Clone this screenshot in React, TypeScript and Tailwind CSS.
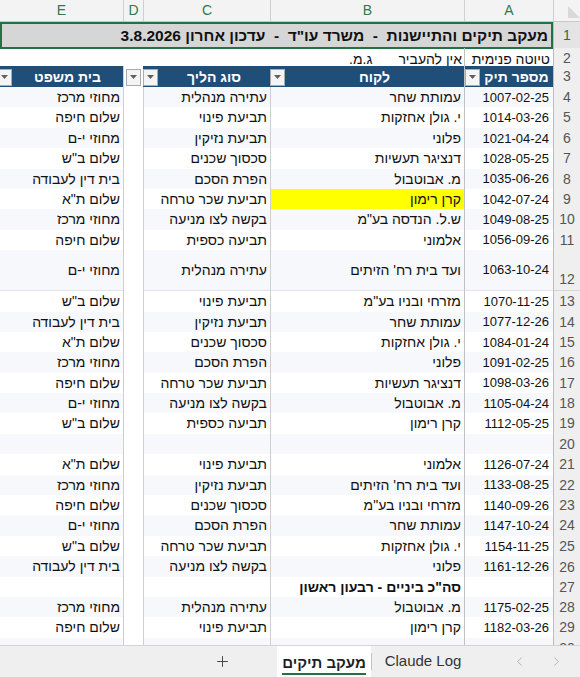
import { ChevronLeft, ChevronRight, Plus } from 'lucide-react';

type Row = {
  n: number;
  a?: string;
  b?: string;
  c?: string;
  e?: string;
  tall?: boolean;
  hl?: boolean;
  total?: boolean;
  thick?: boolean;
};

const rows: Row[] = [
  { n: 4, a: '1007-02-25', b: 'עמותת שחר', c: 'עתירה מנהלית', e: 'מחוזי מרכז' },
  { n: 5, a: '1014-03-26', b: 'י. גולן אחזקות', c: 'תביעת פינוי', e: 'שלום חיפה' },
  { n: 6, a: '1021-04-24', b: 'פלוני', c: 'תביעת נזיקין', e: 'מחוזי י-ם' },
  { n: 7, a: '1028-05-25', b: 'דנציגר תעשיות', c: 'סכסוך שכנים', e: 'שלום ב"ש' },
  { n: 8, a: '1035-06-26', b: 'מ. אבוטבול', c: 'הפרת הסכם', e: 'בית דין לעבודה' },
  { n: 9, a: '1042-07-24', b: 'קרן רימון', c: 'תביעת שכר טרחה', e: 'שלום ת"א', hl: true },
  { n: 10, a: '1049-08-25', b: 'ש.ל. הנדסה בע"מ', c: 'בקשה לצו מניעה', e: 'מחוזי מרכז' },
  { n: 11, a: '1056-09-26', b: 'אלמוני', c: 'תביעה כספית', e: 'שלום חיפה' },
  { n: 12, a: '1063-10-24', b: "ועד בית רח' הזיתים", c: 'עתירה מנהלית', e: 'מחוזי י-ם', tall: true },
  { n: 13, a: '1070-11-25', b: 'מזרחי ובניו בע"מ', c: 'תביעת פינוי', e: 'שלום ב"ש' },
  { n: 14, a: '1077-12-26', b: 'עמותת שחר', c: 'תביעת נזיקין', e: 'בית דין לעבודה' },
  { n: 15, a: '1084-01-24', b: 'י. גולן אחזקות', c: 'סכסוך שכנים', e: 'שלום ת"א' },
  { n: 16, a: '1091-02-25', b: 'פלוני', c: 'הפרת הסכם', e: 'מחוזי מרכז' },
  { n: 17, a: '1098-03-26', b: 'דנציגר תעשיות', c: 'תביעת שכר טרחה', e: 'שלום חיפה' },
  { n: 18, a: '1105-04-24', b: 'מ. אבוטבול', c: 'בקשה לצו מניעה', e: 'מחוזי י-ם' },
  { n: 19, a: '1112-05-25', b: 'קרן רימון', c: 'תביעה כספית', e: 'שלום ב"ש' },
  { n: 20 },
  { n: 21, a: '1126-07-24', b: 'אלמוני', c: 'תביעת פינוי', e: 'שלום ת"א' },
  { n: 22, a: '1133-08-25', b: "ועד בית רח' הזיתים", c: 'תביעת נזיקין', e: 'מחוזי מרכז' },
  { n: 23, a: '1140-09-26', b: 'מזרחי ובניו בע"מ', c: 'סכסוך שכנים', e: 'שלום חיפה' },
  { n: 24, a: '1147-10-24', b: 'עמותת שחר', c: 'הפרת הסכם', e: 'מחוזי י-ם' },
  { n: 25, a: '1154-11-25', b: 'י. גולן אחזקות', c: 'תביעת שכר טרחה', e: 'שלום ב"ש' },
  { n: 26, a: '1161-12-26', b: 'פלוני', c: 'בקשה לצו מניעה', e: 'בית דין לעבודה', thick: true },
  { n: 27, b: 'סה"כ ביניים - רבעון ראשון', total: true },
  { n: 28, a: '1175-02-25', b: 'מ. אבוטבול', c: 'עתירה מנהלית', e: 'מחוזי מרכז' },
  { n: 29, a: '1182-03-26', b: 'קרן רימון', c: 'תביעת פינוי', e: 'שלום חיפה' },
  { n: 30 },
];

const FONT = { fontFamily: '"Liberation Sans", "Noto Sans", sans-serif' };

function FilterButton({ className = '' }: { className?: string }) {
  return (
    <div
      className={`w-[15px] h-[17px] shrink-0 bg-[#f4f4f4] border border-[#ababab] flex items-center justify-center ${className}`}
    >
      <svg width="7" height="4" viewBox="0 0 7 4">
        <polygon points="0,0 7,0 3.5,4" fill="#5f5f5f" />
      </svg>
    </div>
  );
}

function DataRow({ row }: { row: Row }) {
  const band = row.n % 2 === 0 && !row.total ? 'bg-[#f6f8fb]' : 'bg-white';
  const line = row.thick ? 'border-b-2 border-b-black' : 'border-b border-b-[#dde3ea]';
  const height = row.tall ? 'h-[41px]' : 'h-[20.4px]';
  return (
    <div className={`grid grid-cols-[27px_89px_194px_127px_20px_1fr] ${height}`}>
      <div
        className={`flex justify-center ${row.tall ? 'items-end' : 'items-center'} bg-[#efefef] border-b border-b-[#d6d6d6] border-l border-l-[#bcbcbc] text-[14px] text-[#555]`}
      >
        {row.n}
      </div>
      <div className={`flex items-center pr-[4px] text-[13px] border-l border-l-[#c2c2c2] ${band} ${line}`}>
        {row.a}
      </div>
      <div
        className={`flex items-center pr-[3px] text-[14px] border-l border-l-[#cfcfcf] whitespace-nowrap ${row.hl ? 'bg-[#ffff00]' : band} ${row.total ? 'font-bold' : ''} ${line}`}
      >
        {row.b}
      </div>
      <div className={`flex items-center pr-[3px] text-[14px] border-l border-l-[#cfcfcf] whitespace-nowrap ${band} ${line}`}>
        {row.c}
      </div>
      <div className="bg-white border-l border-l-[#cfcfcf]" />
      <div className={`flex items-center pr-[3px] text-[14px] whitespace-nowrap ${band} ${line}`}>{row.e}</div>
    </div>
  );
}

export default function App() {
  return (
    <div className="w-[580px] h-[677px] flex flex-col overflow-hidden bg-white text-[#111]" style={FONT}>
      <div dir="rtl" className="flex-1 overflow-hidden">
        {/* Column letters */}
        <div className="grid grid-cols-[27px_89px_194px_127px_20px_1fr] h-[22px] bg-[#f3f3f3] border-b border-b-[#c8c8c8] text-[14px] text-[#2d7a4d]">
          <div className="flex items-end justify-start border-l border-l-[#d0d0d0] pl-[3px] pb-[3px]">
            <svg width="12" height="12" viewBox="0 0 12 12">
              <polygon points="0,12 0,0 12,12" fill="#d9d9d9" />
            </svg>
          </div>
          <div className="flex items-center justify-center border-l border-l-[#d0d0d0]">A</div>
          <div className="flex items-center justify-center border-l border-l-[#d0d0d0]">B</div>
          <div className="flex items-center justify-center border-l border-l-[#d0d0d0]">C</div>
          <div className="flex items-center justify-center border-l border-l-[#d0d0d0]">D</div>
          <div className="flex items-center justify-center">E</div>
        </div>

        {/* Row 1: title */}
        <div className="grid grid-cols-[27px_89px_194px_127px_20px_1fr] h-[26px]">
          <div className="flex items-end justify-center pb-[2px] bg-[#e4e4e4] border-b border-b-[#d6d6d6] border-l border-l-[#bcbcbc] text-[14px] text-[#217346]">
            1
          </div>
          <div className="col-span-5 flex items-center pr-[3px] bg-[#d6d6d6] border-2 border-[#217346] text-[15.5px] font-bold whitespace-pre">
            {'מעקב תיקים והתיישנות  -  משרד עו"ד  -  עדכון אחרון 3.8.2026'}
          </div>
        </div>

        {/* Row 2 */}
        <div className="grid grid-cols-[27px_89px_194px_127px_20px_1fr] h-[18px] text-[14px]">
          <div className="flex items-center justify-center bg-[#efefef] border-b border-b-[#d6d6d6] border-l border-l-[#bcbcbc] text-[#555]">
            2
          </div>
          <div className="flex items-center pr-[3px] border-l border-l-[#c2c2c2] whitespace-nowrap">טיוטה פנימית</div>
          <div className="flex items-center gap-[26px] pr-[2px] whitespace-nowrap">
            <span>אין להעביר</span>
            <span>ג.מ.</span>
          </div>
          <div />
          <div />
          <div />
        </div>

        {/* Row 3: table header */}
        <div className="grid grid-cols-[27px_89px_194px_127px_20px_1fr] h-[21px] text-[14px] font-bold text-white">
          <div className="flex items-center justify-center bg-[#efefef] border-b border-b-[#d6d6d6] border-l border-l-[#bcbcbc] font-normal text-[#555]">
            3
          </div>
          <div className="flex items-center bg-[#1f4e79] border-l border-l-[#c2c2c2]">
            <span className="flex-1 text-center">מספר תיק</span>
            <FilterButton />
          </div>
          <div className="flex items-center bg-[#1f4e79]">
            <span className="flex-1 text-center">לקוח</span>
            <FilterButton />
          </div>
          <div className="flex items-center bg-[#1f4e79]">
            <span className="flex-1 text-center">סוג הליך</span>
            <FilterButton />
          </div>
          <div className="flex items-center bg-white border-l border-l-[#cfcfcf]">
            <span className="flex-1" />
            <FilterButton className="ml-[2px]" />
          </div>
          <div className="flex items-center bg-[#1f4e79]">
            <span className="flex-1 text-center">בית משפט</span>
            <FilterButton className="-ml-[3px]" />
          </div>
        </div>

        {rows.map((row) => (
          <DataRow key={row.n} row={row} />
        ))}
      </div>

      {/* Sheet tabs */}
      <div className="h-[32px] flex shrink-0 bg-[#efefef] border-t border-t-[#d4d4d4] text-[15px] text-[#333]">
        <div className="w-[277px] flex items-center justify-end pr-[46px]">
          <Plus size={17} strokeWidth={1.4} className="text-[#444]" />
        </div>
        <div dir="rtl" className="w-[94px] flex items-center justify-center bg-white">
          <span className="font-semibold text-[#1f1f1f] border-b-2 border-b-[#217346] leading-[20px] mt-[4px]">
            מעקב תיקים
          </span>
        </div>
        <div className="w-px my-[7px] bg-[#c4c4c4]" />
        <div className="w-[102px] flex items-center justify-center">Claude Log</div>
        <div className="w-[38px]" />
        <div className="flex-1 flex items-center gap-[22px]">
          <ChevronLeft size={15} strokeWidth={1.2} className="text-[#a0a0a0]" />
          <ChevronRight size={15} strokeWidth={1.2} className="text-[#a0a0a0]" />
        </div>
      </div>
    </div>
  );
}
